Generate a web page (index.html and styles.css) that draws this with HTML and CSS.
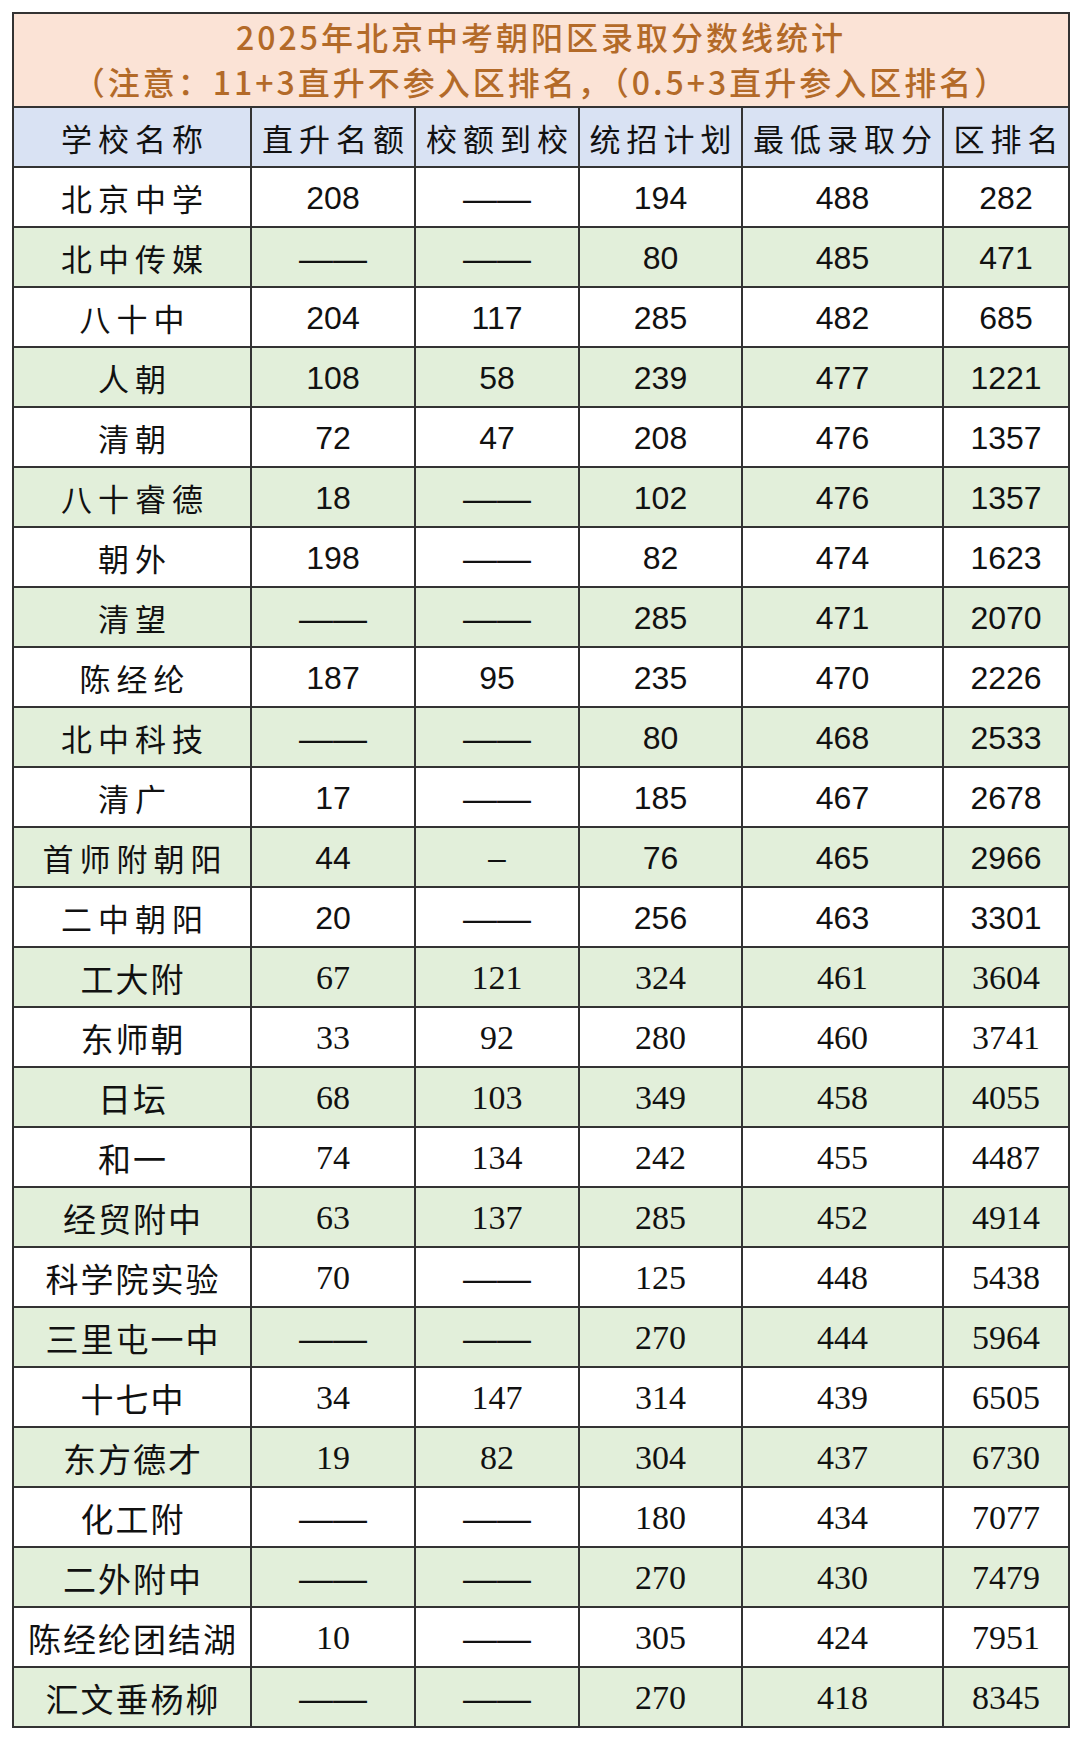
FILE: index.html
```html
<!DOCTYPE html>
<html lang="zh-CN">
<head>
<meta charset="utf-8">
<title>2025年北京中考朝阳区录取分数线统计</title>
<link rel="stylesheet" href="styles.css">
</head>
<body>
<div class="page">
<table class="score-table">
  <colgroup>
    <col class="c-name"><col class="c-a"><col class="c-b"><col class="c-c"><col class="c-d"><col class="c-e">
  </colgroup>
  <thead>
    <tr class="title-row">
      <th colspan="6">
        <div class="t1">2025年北京中考朝阳区录取分数线统计</div>
        <div class="t2">（注意：11+3直升不参入区排名，（0.5+3直升参入区排名）</div>
      </th>
    </tr>
    <tr class="head-row">
      <th><span class="sp">学校名称</span></th>
      <th><span class="sp">直升名额</span></th>
      <th><span class="sp">校额到校</span></th>
      <th><span class="sp">统招计划</span></th>
      <th><span class="sp">最低录取分</span></th>
      <th><span class="sp">区排名</span></th>
    </tr>
  </thead>
  <tbody class="kai">
    <tr><td class="nm"><span class="sp">北京中学</span></td><td>208</td><td class="dash">——</td><td>194</td><td>488</td><td>282</td></tr>
    <tr class="g"><td class="nm"><span class="sp">北中传媒</span></td><td class="dash">——</td><td class="dash">——</td><td>80</td><td>485</td><td>471</td></tr>
    <tr><td class="nm"><span class="sp">八十中</span></td><td>204</td><td>117</td><td>285</td><td>482</td><td>685</td></tr>
    <tr class="g"><td class="nm"><span class="sp">人朝</span></td><td>108</td><td>58</td><td>239</td><td>477</td><td>1221</td></tr>
    <tr><td class="nm"><span class="sp">清朝</span></td><td>72</td><td>47</td><td>208</td><td>476</td><td>1357</td></tr>
    <tr class="g"><td class="nm"><span class="sp">八十睿德</span></td><td>18</td><td class="dash">——</td><td>102</td><td>476</td><td>1357</td></tr>
    <tr><td class="nm"><span class="sp">朝外</span></td><td>198</td><td class="dash">——</td><td>82</td><td>474</td><td>1623</td></tr>
    <tr class="g"><td class="nm"><span class="sp">清望</span></td><td class="dash">——</td><td class="dash">——</td><td>285</td><td>471</td><td>2070</td></tr>
    <tr><td class="nm"><span class="sp">陈经纶</span></td><td>187</td><td>95</td><td>235</td><td>470</td><td>2226</td></tr>
    <tr class="g"><td class="nm"><span class="sp">北中科技</span></td><td class="dash">——</td><td class="dash">——</td><td>80</td><td>468</td><td>2533</td></tr>
    <tr><td class="nm"><span class="sp">清广</span></td><td>17</td><td class="dash">——</td><td>185</td><td>467</td><td>2678</td></tr>
    <tr class="g"><td class="nm"><span class="sp">首师附朝阳</span></td><td>44</td><td class="short">–</td><td>76</td><td>465</td><td>2966</td></tr>
    <tr><td class="nm"><span class="sp">二中朝阳</span></td><td>20</td><td class="dash">——</td><td>256</td><td>463</td><td>3301</td></tr>
  </tbody>
  <tbody class="song">
    <tr class="g"><td class="nm">工大附</td><td>67</td><td>121</td><td>324</td><td>461</td><td>3604</td></tr>
    <tr><td class="nm">东师朝</td><td>33</td><td>92</td><td>280</td><td>460</td><td>3741</td></tr>
    <tr class="g"><td class="nm">日坛</td><td>68</td><td>103</td><td>349</td><td>458</td><td>4055</td></tr>
    <tr><td class="nm">和一</td><td>74</td><td>134</td><td>242</td><td>455</td><td>4487</td></tr>
    <tr class="g"><td class="nm">经贸附中</td><td>63</td><td>137</td><td>285</td><td>452</td><td>4914</td></tr>
    <tr><td class="nm">科学院实验</td><td>70</td><td class="dash">——</td><td>125</td><td>448</td><td>5438</td></tr>
    <tr class="g"><td class="nm">三里屯一中</td><td class="dash">——</td><td class="dash">——</td><td>270</td><td>444</td><td>5964</td></tr>
    <tr><td class="nm">十七中</td><td>34</td><td>147</td><td>314</td><td>439</td><td>6505</td></tr>
    <tr class="g"><td class="nm">东方德才</td><td>19</td><td>82</td><td>304</td><td>437</td><td>6730</td></tr>
    <tr><td class="nm">化工附</td><td class="dash">——</td><td class="dash">——</td><td>180</td><td>434</td><td>7077</td></tr>
    <tr class="g"><td class="nm">二外附中</td><td class="dash">——</td><td class="dash">——</td><td>270</td><td>430</td><td>7479</td></tr>
    <tr><td class="nm">陈经纶团结湖</td><td>10</td><td class="dash">——</td><td>305</td><td>424</td><td>7951</td></tr>
    <tr class="g"><td class="nm">汇文垂杨柳</td><td class="dash">——</td><td class="dash">——</td><td>270</td><td>418</td><td>8345</td></tr>
  </tbody>
</table>
</div>
</body>
</html>
```
FILE: styles.css
```css
html, body {
  margin: 0;
  padding: 0;
  background: #ffffff;
}

.page {
  padding: 12px 0 0 12px;
}

.score-table {
  border-collapse: collapse;
  table-layout: fixed;
  width: 1056px;
  color: #111111;
}

.c-name { width: 238px; }
.c-a { width: 164px; }
.c-b { width: 164px; }
.c-c { width: 163px; }
.c-d { width: 201px; }
.c-e { width: 126px; }

.score-table th,
.score-table td {
  border: 2px solid #333333;
  text-align: center;
  padding: 2px 0 0 0;
  white-space: nowrap;
  overflow: hidden;
}

.title-row th {
  background: #fbe3d6;
  color: #b36a28;
  font-family: "Noto Sans CJK SC", sans-serif;
  font-weight: 500;
  font-size: 32px;
  letter-spacing: 3px;
  height: 92px;
  padding: 0 0 2px 0;
  box-sizing: border-box;
}

.t1, .t2 {
  line-height: 45px;
}

.head-row th {
  background: #d9e2f3;
  height: 60px;
  box-sizing: border-box;
  font-family: "Noto Sans CJK SC", sans-serif;
  font-weight: 400;
  font-size: 31px;
  line-height: 40px;
}

.sp {
  letter-spacing: 6px;
  margin-right: -6px;
}

.score-table td {
  height: 60px;
  box-sizing: border-box;
  line-height: 40px;
}

.score-table tr.g td {
  background: #e2efda;
}

.kai td {
  font-family: "Liberation Sans", Arial, sans-serif;
  font-size: 32px;
}

.kai td.nm {
  font-family: "Noto Sans CJK SC", sans-serif;
  font-size: 31px;
}

.song td {
  font-family: "Liberation Serif", "Times New Roman", serif;
  font-size: 34px;
}

.song td.nm {
  font-family: "Noto Sans CJK SC", sans-serif;
  font-size: 33px;
  font-weight: 400;
  letter-spacing: 2px;
  padding-left: 2px;
}

.score-table td.dash {
  font-family: "Liberation Sans", Arial, sans-serif;
  font-size: 34px;
  letter-spacing: 0;
}

.score-table td.short {
  font-family: "Liberation Sans", Arial, sans-serif;
  font-size: 32px;
}
```
